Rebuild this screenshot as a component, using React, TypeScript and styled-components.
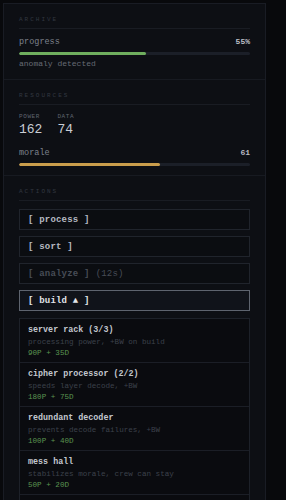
import React from 'react';
import styled, { createGlobalStyle } from 'styled-components';

const Global = createGlobalStyle`
  html, body { margin: 0; padding: 0; background: #08090c; height: 100%; overflow: hidden; }
  body { font-family: "Liberation Mono", "DejaVu Sans Mono", monospace; }
  #root { height: 100%; }
`;

const Frame = styled.div`
  padding: 3px 0 0 3px;
  height: 100%;
  box-sizing: border-box;
`;

const Panel = styled.div`
  width: 263px;
  height: 100%;
  box-sizing: border-box;
  background: #0d0f14;
  border: 1px solid #191c24;
  border-bottom: none;
  overflow-y: auto;
  &::-webkit-scrollbar { width: 3px; }
  &::-webkit-scrollbar-track { background: #0d0f14; }
  &::-webkit-scrollbar-thumb { background: #272b35; }
`;

const Section = styled.section<{ $pb: number; $last?: boolean }>`
  padding: 12px 15px ${p => p.$pb}px;
  border-bottom: ${p => (p.$last ? 'none' : '1px solid #171a21')};
`;

const Label = styled.div`
  font-size: 6px;
  letter-spacing: 2px;
  color: #323741;
  padding-bottom: 5px;
  border-bottom: 1px solid #191c23;
  margin-bottom: 8px;
`;

const Row = styled.div`
  display: flex;
  justify-content: space-between;
  align-items: baseline;
  font-size: 8.5px;
  color: #7d828c;
`;

const Value = styled.span`
  color: #b9bdc5;
  font-weight: bold;
  font-size: 8px;
`;

const Track = styled.div`
  height: 3px;
  background: #1b1f28;
  border-radius: 2px;
  margin-top: 5px;
  overflow: hidden;
`;

const Fill = styled.div<{ $color: string }>`
  height: 100%;
  background: ${p => p.$color};
  border-radius: 2px;
`;

const Note = styled.div`
  font-size: 8px;
  color: #666b75;
  margin-top: 4px;
`;

const Stats = styled.div`
  display: flex;
  gap: 15px;
  margin-bottom: 11px;
`;

const Stat = styled.div`
  display: flex;
  flex-direction: column;
`;

const StatName = styled.span`
  font-size: 6px;
  color: #5f646e;
  letter-spacing: 0.6px;
`;

const StatValue = styled.span`
  font-size: 13px;
  color: #c9cdd4;
  margin-top: 2px;
`;

const Buttons = styled.div`
  display: flex;
  flex-direction: column;
  gap: 6px;
`;

const Button = styled.button<{ $disabled?: boolean; $active?: boolean }>`
  all: unset;
  box-sizing: border-box;
  height: 21px;
  padding: 0 8px;
  display: flex;
  align-items: center;
  font-family: "Liberation Mono", "DejaVu Sans Mono", monospace;
  font-size: 9px;
  font-weight: bold;
  letter-spacing: 0.2px;
  border: 1px solid ${p => (p.$active ? '#5e646f' : '#20242c')};
  background: ${p => (p.$active ? '#10131a' : '#0b0d11')};
  color: ${p => (p.$disabled ? '#474c56' : p.$active ? '#e2e5ea' : '#b5b9c1')};
`;

const Muted = styled.span`
  font-weight: normal;
  margin-left: 6px;
`;

const Dropdown = styled.div`
  margin-top: 7px;
  border: 1px solid #1d2129;
  background: #0a0b0f;
`;

const Item = styled.div`
  padding: 6px 8px 5px;
  border-bottom: 1px solid #1b1e26;
  display: flex;
  flex-direction: column;
  gap: 3px;
`;

const ItemTitle = styled.div`
  font-size: 8.4px;
  font-weight: bold;
  color: #c3c7ce;
`;

const ItemDesc = styled.div`
  font-size: 7.6px;
  color: #3c414b;
`;

const ItemCost = styled.div`
  font-size: 7.6px;
  color: #5a9550;
`;

const items = [
  { t: 'server rack (3/3)', d: 'processing power, +BW on build', c: '90P + 35D' },
  { t: 'cipher processor (2/2)', d: 'speeds layer decode, +BW', c: '180P + 75D' },
  { t: 'redundant decoder', d: 'prevents decode failures, +BW', c: '100P + 40D' },
  { t: 'mess hall', d: 'stabilizes morale, crew can stay', c: '50P + 20D' },
  { t: 'signal relay', d: 'extends range, +BW', c: '120P + 50D' },
];

export default function App() {
  return (
    <>
      <Global />
      <Frame>
        <Panel>
          <Section $pb={11}>
            <Label>ARCHIVE</Label>
            <Row>
              <span>progress</span>
              <Value>55%</Value>
            </Row>
            <Track>
              <Fill $color="#6fae5e" style={{ width: '55%' }} />
            </Track>
            <Note>anomaly detected</Note>
          </Section>
          <Section $pb={9}>
            <Label>RESOURCES</Label>
            <Stats>
              <Stat>
                <StatName>POWER</StatName>
                <StatValue>162</StatValue>
              </Stat>
              <Stat>
                <StatName>DATA</StatName>
                <StatValue>74</StatValue>
              </Stat>
            </Stats>
            <Row>
              <span>morale</span>
              <Value>61</Value>
            </Row>
            <Track>
              <Fill $color="#c99d4c" style={{ width: '61%' }} />
            </Track>
          </Section>
          <Section $pb={40} $last>
            <Label>ACTIONS</Label>
            <Buttons>
              <Button>[ process ]</Button>
              <Button>[ sort ]</Button>
              <Button $disabled>
                [ analyze ]<Muted>(12s)</Muted>
              </Button>
              <Button $active>[ build ▲ ]</Button>
            </Buttons>
            <Dropdown>
              {items.map(it => (
                <Item key={it.t}>
                  <ItemTitle>{it.t}</ItemTitle>
                  <ItemDesc>{it.d}</ItemDesc>
                  <ItemCost>{it.c}</ItemCost>
                </Item>
              ))}
            </Dropdown>
          </Section>
        </Panel>
      </Frame>
    </>
  );
}
